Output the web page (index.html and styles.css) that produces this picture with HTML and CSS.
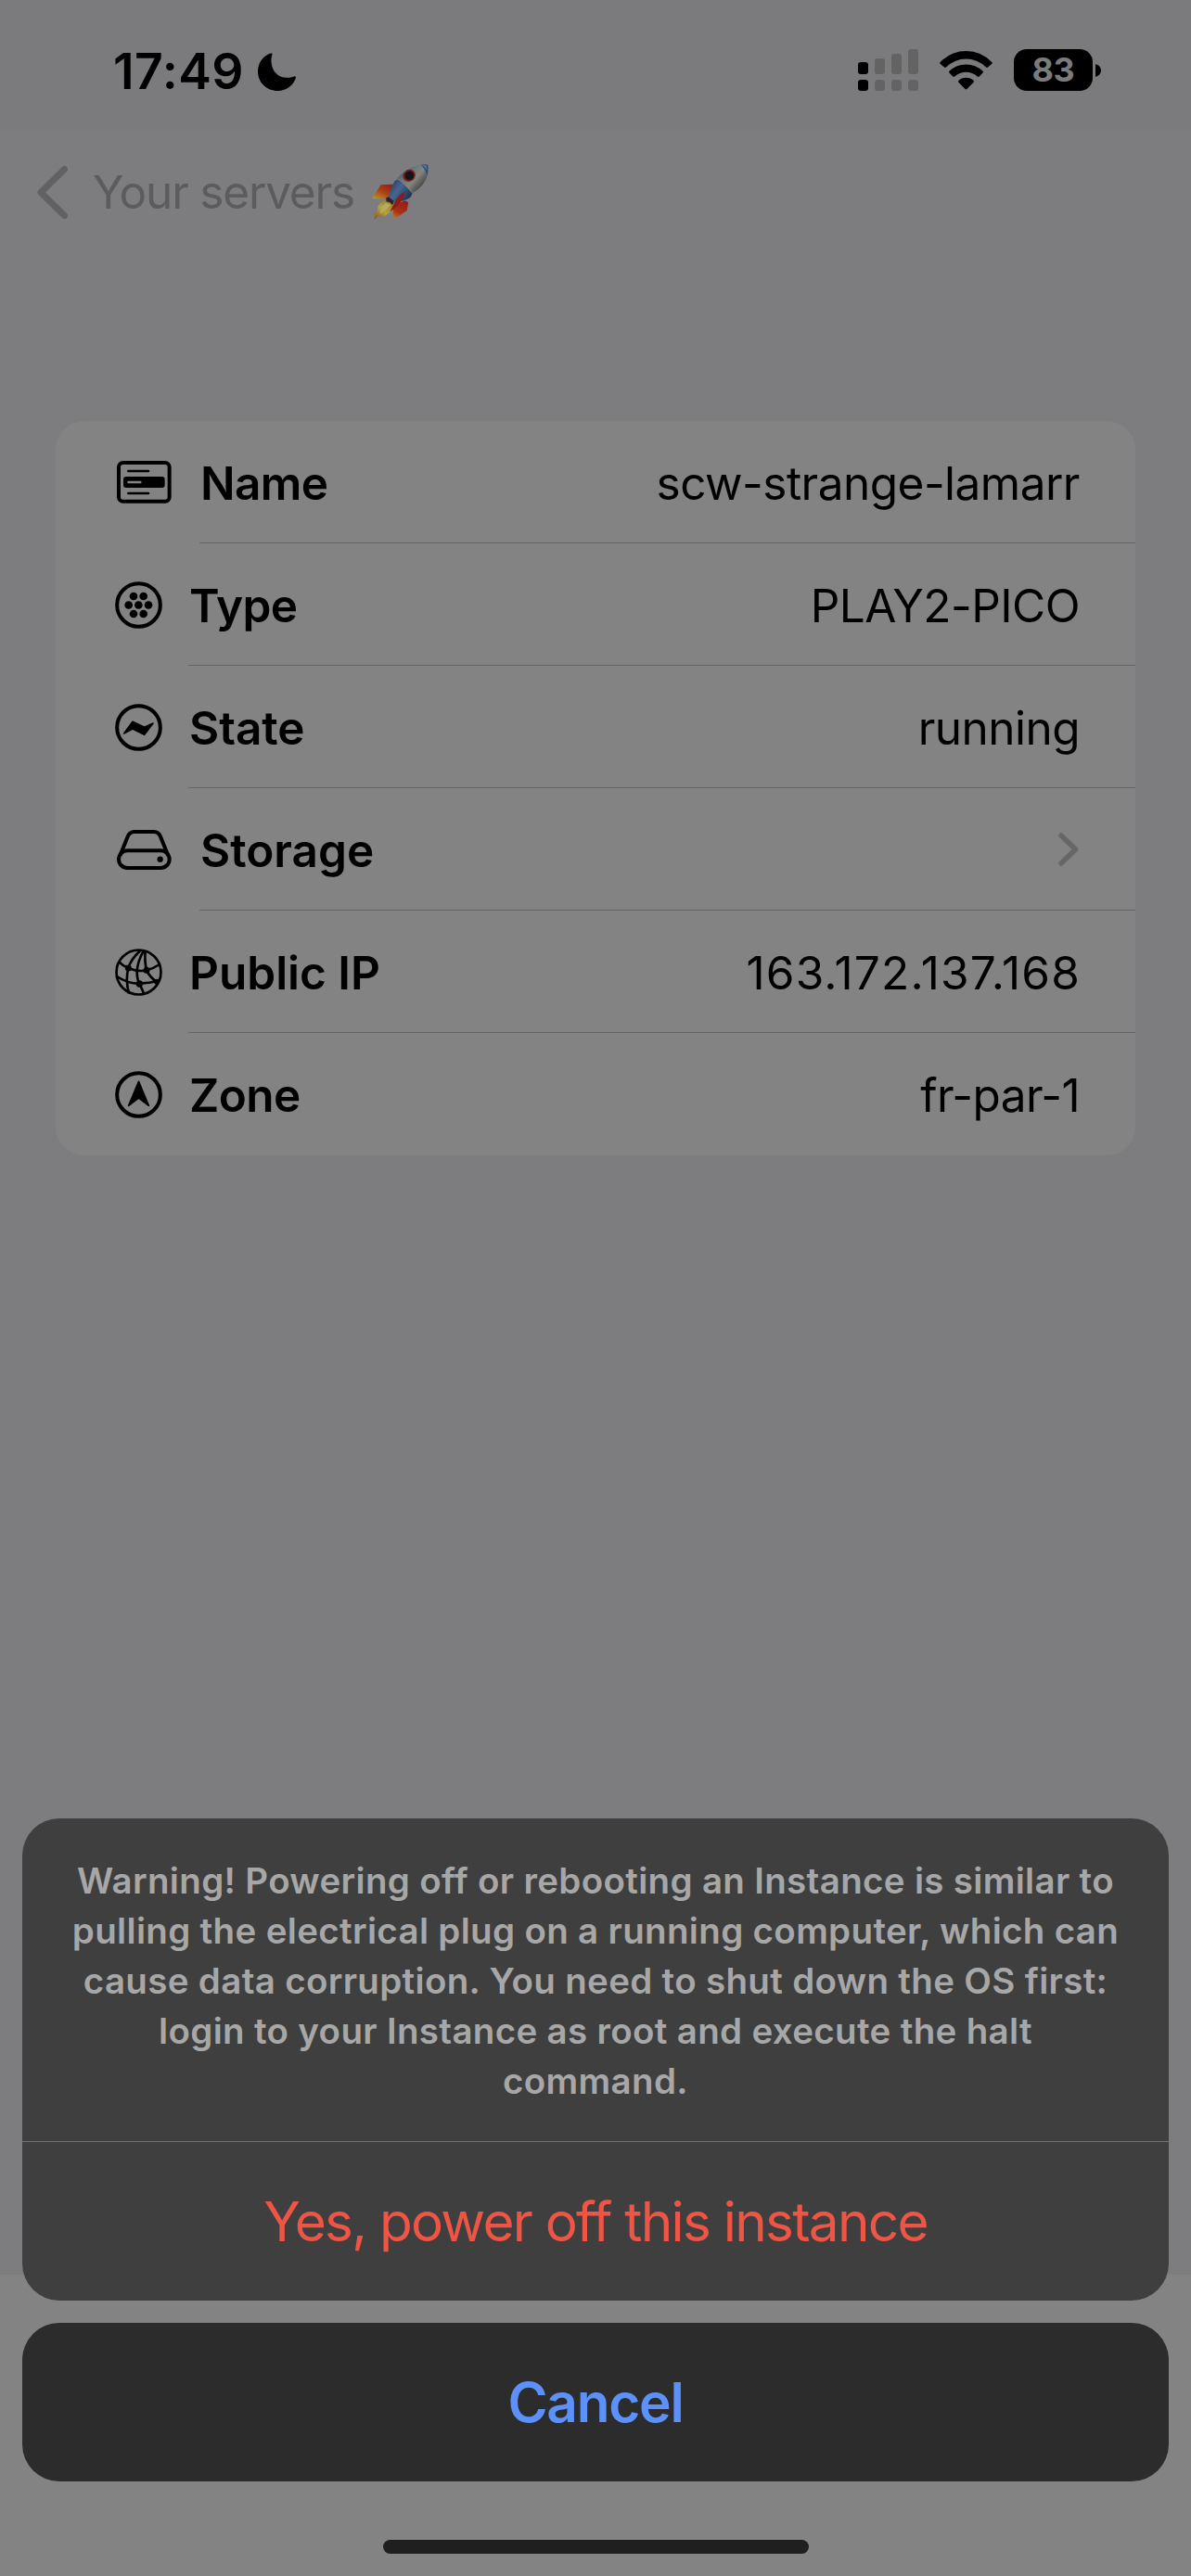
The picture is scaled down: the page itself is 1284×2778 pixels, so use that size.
FILE: index.html
```html
<!DOCTYPE html>
<html lang="en">
<head>
<meta charset="utf-8">
<title>Your servers</title>
<link rel="stylesheet" href="styles.css">
</head>
<body>
<div class="screen">
  <header class="status">
    <div class="clock">
      <span class="time">17:49</span>
      <svg class="moon" viewBox="0 0 41 41"><path d="M13.5.6C15 0 16 1 15.4 2.3 14.6 4.600 14.300 7 14.500 9.700 15 19.500 21.500 26.500 31 26.800 34 26.900 36.700 26.400 39 25.500 40.200 25 41.200 26 40.800 27.200 37.800 35.500 30.500 41 21.500 41 9.500 41 0 32 0 20 0 11 5.500 3.500 13.500.6Z"/></svg>
    </div>
    <div class="indicators">
      <svg class="signal" viewBox="0 0 65 45">
        <rect y="14" width="11" height="13" rx="3"/><rect y="33" width="11" height="12" rx="3"/>
        <g class="faint">
          <rect x="18" y="10" width="11" height="17" rx="3"/><rect x="18" y="33" width="11" height="12" rx="3.500"/>
          <rect x="36" y="5" width="11" height="22" rx="3"/><rect x="36" y="33" width="11" height="12" rx="3.500"/>
          <rect x="54" y="0" width="11" height="27" rx="3"/><rect x="54" y="33" width="11" height="12" rx="3.500"/>
        </g>
      </svg>
      <svg class="wifi" viewBox="0 0 172 127">
        <path d="M1 37Q0 40 3 43L15 53Q18 55 21 53 50 26 86 26T151 53Q154 55 157 53L169 43Q172 40 171 37 135 0 86 0T1 37Z"/>
        <path d="M31 66Q29 69 32 72L43 83Q46 86 49 83 66 69 86 69T123 83Q126 86 129 83L140 72Q143 69 141 66 117 44 86 44T31 66Z"/>
        <path d="M61 97Q59 100 62 103L83 124Q86 127 89 124L110 103Q113 100 111 97 100 87 86 87T61 97Z"/>
      </svg>
      <div class="battery"><span class="level">83</span></div>
      <svg class="nub" viewBox="0 0 6 14"><path d="M0 0Q6 2 6 7T0 14Z"/></svg>
    </div>
  </header>

  <nav class="nav">
    <svg class="back" viewBox="0 0 33 57"><path d="M29.500 3.500 4 28.500 29.500 53.500"/></svg>
    <span class="nav-title">Your servers</span>
    <svg class="rocket" viewBox="30 30 189 180">
      <defs>
        <linearGradient id="hull" gradientUnits="userSpaceOnUse" x1="108" y1="65" x2="178" y2="125">
          <stop offset="0" stop-color="#37577f"/><stop offset=".28" stop-color="#65717d"/><stop offset=".62" stop-color="#84857f"/><stop offset="1" stop-color="#424345"/>
        </linearGradient>
        <linearGradient id="tail" gradientUnits="userSpaceOnUse" x1="88" y1="105" x2="145" y2="148">
          <stop offset="0" stop-color="#2d4467"/><stop offset=".4" stop-color="#47668e"/><stop offset="1" stop-color="#1f3557"/>
        </linearGradient>
        <linearGradient id="fin" gradientUnits="userSpaceOnUse" x1="78" y1="94" x2="52" y2="145">
          <stop offset="0" stop-color="#9b2016"/><stop offset=".5" stop-color="#ad4218"/><stop offset="1" stop-color="#b09327"/>
        </linearGradient>
        <linearGradient id="fin-low" gradientUnits="userSpaceOnUse" x1="140" y1="140" x2="106" y2="208">
          <stop offset="0" stop-color="#8d1b14"/><stop offset=".65" stop-color="#a8301a"/><stop offset="1" stop-color="#b08022"/>
        </linearGradient>
        <linearGradient id="flame" gradientUnits="userSpaceOnUse" x1="88" y1="150" x2="42" y2="206">
          <stop offset="0" stop-color="#a8801d"/><stop offset=".5" stop-color="#b4a243"/><stop offset="1" stop-color="#92501b"/>
        </linearGradient>
      </defs>
      <path fill="url(#fin)" d="M108 82 103 95 62 97 33 141 78 143 91 134Z"/>
      <path fill="url(#flame)" d="M78 147 61 155 52 168 51 179 38 193 45 192 39 209 54 199 59 204 68 196 74 200 83 191 93 186 103 160Z"/>
      <path fill="#b5ac63" d="M78 155 64 168 59 190 76 180 94 162Z"/>
      <path fill="url(#fin-low)" d="M138 148 151 153 146 180 104 209 101 176 117 158Z"/>
      <path fill="url(#tail)" d="M107 85Q92 107 89 134L105 151Q133 153 158 137L164 124 118 77Z"/>
      <path fill="url(#hull)" d="M113 77Q143 42 191 31L214 59Q207 98 164 124Q148 97 113 77Z"/>
      <path fill="#2c4b78" d="M191 31Q207 28 214 34 216 47 212 67 206 47 191 31Z"/>
      <path fill="#51729b" d="M191 31Q203 29 209 34L211 50Q203 38 191 31Z"/>
      <path fill="none" stroke="#8d8666" stroke-width="2.500" d="M114 77Q145 91 164 124"/>
      <ellipse cx="153" cy="67" rx="21" ry="19" fill="#7e1b1b" transform="rotate(-35 153 67)"/>
      <ellipse cx="154" cy="67" rx="15" ry="14" fill="#111418" transform="rotate(-35 154 67)"/>
      <path fill="#20262e" d="M79 139 88 136 105 151 99 162 91 154 79 151Z"/>
      <path fill="#8c1a17" d="M140 119Q121 126 108 151L91 184Q119 166 132 143Z"/>
    </svg>
  </nav>

  <main class="content">
    <ul class="card">
      <li class="row">
        <span class="icon wide"><svg viewBox="0 0 176 137"><rect class="line" x="6" y="6" width="164" height="125" rx="14"/><path class="thin" d="M37 33H102M37 105H102"/><rect x="21" y="51" width="134" height="36" rx="9"/><path class="slot" d="M37 69H76"/></svg></span>
        <div class="cell"><span class="label snug">Name</span><span class="value">scw-strange-lamarr</span></div>
      </li>
      <li class="row">
        <span class="icon"><svg viewBox="0 0 153 153"><circle class="line" cx="76.500" cy="76.500" r="70"/><circle cx="60" cy="48" r="13"/><circle cx="92" cy="48" r="13"/><circle cx="44" cy="76.500" r="13"/><circle cx="76" cy="76.500" r="13"/><circle cx="108" cy="76.500" r="13"/><circle cx="60" cy="105" r="13"/><circle cx="92" cy="105" r="13"/></svg></span>
        <div class="cell"><span class="label snug">Type</span><span class="value">PLAY2-PICO</span></div>
      </li>
      <li class="row">
        <span class="icon"><svg viewBox="0 0 153 153"><circle class="line" cx="76.500" cy="76.500" r="70"/><path class="solid" d="M29 96 57 58 95 76 123 63 95 100 57 81Z"/></svg></span>
        <div class="cell"><span class="label">State</span><span class="value">running</span></div>
      </li>
      <li class="row">
        <span class="icon wide"><svg class="disk" viewBox="0 0 176 129"><rect class="line" x="6" y="67" width="164" height="56" rx="28"/><path class="line" d="M10 83 35 22Q41 6 56 6H120Q135 6 141 22L166 83"/><circle cx="140" cy="95" r="9.500"/></svg></span>
        <div class="cell"><span class="label">Storage</span><svg class="chevron" viewBox="0 0 22 36"><path d="M3 3 18.500 18 3 33"/></svg></div>
      </li>
      <li class="row">
        <span class="icon"><svg viewBox="0 0 153 153"><circle class="mesh" cx="76.500" cy="76.500" r="72"/><path class="mesh" d="M14 44Q26 57 43 63 74 76 102 70 125 64 144 51M6 90Q40 113 79 113 110 112 139 105M82 6Q50 36 43 63 33 100 45 145M92 8Q71 45 71 78 72 102 79 113L93 144M98 8Q95 42 102 70 113 93 134 107"/><circle cx="43" cy="63" r="10.500"/><circle cx="102" cy="70" r="10.500"/><circle cx="79" cy="114" r="11"/><circle cx="135" cy="107" r="9"/></svg></span>
        <div class="cell"><span class="label">Public IP</span><span class="value digits">163.172.137.168</span></div>
      </li>
      <li class="row">
        <span class="icon"><svg viewBox="0 0 153 153"><circle class="line" cx="76.500" cy="76.500" r="70"/><path class="solid" d="M76.500 34 109 112 76.500 87 44 112Z"/></svg></span>
        <div class="cell"><span class="label snug">Zone</span><span class="value">fr-par-1</span></div>
      </li>
    </ul>
  </main>
  <footer class="toolbar"></footer>

  <section class="sheet">
    <div class="prompt">
      <p class="message">Warning! Powering off or rebooting an Instance is similar to<br>pulling the electrical plug on a running computer, which can<br>cause data corruption. You need to shut down the OS first:<br>login to your Instance as root and execute the halt<br>command.</p>
      <button class="action danger">Yes, power off this instance</button>
    </div>
    <button class="action cancel">Cancel</button>
    <div class="home"></div>
  </section>
</div>
</body>
</html>
```
FILE: styles.css
```css
* { box-sizing: border-box; }

body {
  margin: 0;
  font-family: Inter, "Liberation Sans", sans-serif;
  color: #000;
}

svg { display: block; flex: none; }

.screen {
  position: relative;
  display: flex;
  flex-direction: column;
  width: 1284px;
  height: 2778px;
  overflow: hidden;
  background: #7d7d80;
}

/* Status bar */
.status {
  display: flex;
  justify-content: space-between;
  align-items: center;
  height: 140px;
  padding: 11px 97px 0 122px;
  background: #7b7b7d;
}
.clock {
  display: flex;
  align-items: center;
  padding-top: 3px;
}
.time {
  width: 156px;
  font-size: 53.5px;
  font-weight: 600;
  line-height: 64px;
  letter-spacing: 0.5px;
}
.moon { width: 41px; height: 41px; }
.indicators { display: flex; align-items: center; }
.signal { width: 65px; height: 45px; }
.faint { fill: #636364; }
.wifi { width: 57px; height: 42px; margin-left: 23px; }
.battery {
  display: flex;
  justify-content: center;
  align-items: center;
  width: 85px;
  height: 45px;
  margin-left: 23px;
  border-radius: 14px;
  background: #000;
}
.level {
  color: #7b7b7d;
  font-size: 36px;
  font-weight: 700;
  line-height: 45px;
  letter-spacing: -0.4px;
}
.nub { width: 6px; height: 14px; margin-left: 3px; }

/* Navigation */
.nav {
  display: flex;
  align-items: center;
  height: 134px;
  padding-left: 40px;
}
.back { width: 33px; height: 57px; }
.back path {
  fill: none;
  stroke: #616161;
  stroke-width: 7;
  stroke-linecap: round;
  stroke-linejoin: round;
}
.nav-title {
  width: 300px;
  margin-left: 27px;
  color: #5c5c5c;
  font-size: 49.5px;
  letter-spacing: -1.19px;
  white-space: nowrap;
}
.rocket { width: 63px; height: 60px; }

/* Details card */
.content { flex: 1; padding: 180px 60px 0; }
.card {
  margin: 0;
  padding: 0;
  list-style: none;
  border-radius: 31px;
  background: #838383;
}
.row { display: flex; height: 132px; }
.icon {
  display: flex;
  align-items: center;
  flex: none;
  width: 143px;
  padding: 1px 0 0 64px;
}
.icon svg { width: 51px; height: 51px; }
.icon.wide { width: 155px; padding: 0 0 0 66px; }
.icon.wide svg { width: 58.67px; height: 45.67px; }
.icon.wide .disk { height: 43px; margin-top: 1px; }
.line { fill: none; stroke: #000; stroke-width: 12; }
.thin { fill: none; stroke: #000; stroke-width: 8; stroke-linecap: round; }
.slot { fill: none; stroke: #838383; stroke-width: 7; stroke-linecap: round; }
.mesh { fill: none; stroke: #000; stroke-width: 8; }
.solid { stroke: #000; stroke-width: 5; stroke-linejoin: round; }
.cell {
  display: flex;
  flex: 1;
  justify-content: space-between;
  align-items: center;
  padding: 3px 60px 0 1px;
  border-bottom: 1px solid #666667;
  font-size: 49.5px;
  line-height: 60px;
  white-space: nowrap;
}
.row:last-child .cell { border-bottom-color: transparent; }
.label { font-weight: 600; }
.snug { letter-spacing: -0.6px; }
.value { letter-spacing: -0.52px; }
.digits { letter-spacing: 1.2px; margin-right: -1px; }
.chevron { width: 22px; height: 36px; margin: 0 1px 2px 0; }
.chevron path {
  fill: none;
  stroke: #666667;
  stroke-width: 5.5;
  stroke-linecap: round;
  stroke-linejoin: round;
}

.toolbar { height: 325px; background: #838383; }

/* Action sheet, floating over the page */
.sheet {
  position: absolute;
  left: 0;
  right: 0;
  bottom: 0;
  display: flex;
  flex-direction: column;
  gap: 24px;
  height: 817px;
  padding: 0 24px;
}
.prompt {
  height: 520px;
  border-radius: 40px;
  background: #3f3f3f;
}
.message {
  height: 349px;
  margin: 0;
  padding-top: 40px;
  border-bottom: 1px solid #717172;
  color: #a7a7a8;
  font-size: 38.5px;
  font-weight: 600;
  line-height: 54px;
  letter-spacing: 0.33px;
  text-align: center;
  white-space: nowrap;
}
.action {
  display: block;
  width: 100%;
  height: 171px;
  padding: 0;
  border: 0;
  background: none;
  font-family: inherit;
  font-size: 58.5px;
  text-align: center;
}
.danger { color: #ee5545; letter-spacing: -1.75px; }
.cancel {
  border-radius: 40px;
  background: #2c2c2c;
  color: #5b91f8;
  font-weight: 600;
  letter-spacing: -1.23px;
}
.home {
  align-self: center;
  width: 459px;
  height: 15px;
  margin-top: 39px;
  border-radius: 8px;
  background: #1f1f1f;
}
```
